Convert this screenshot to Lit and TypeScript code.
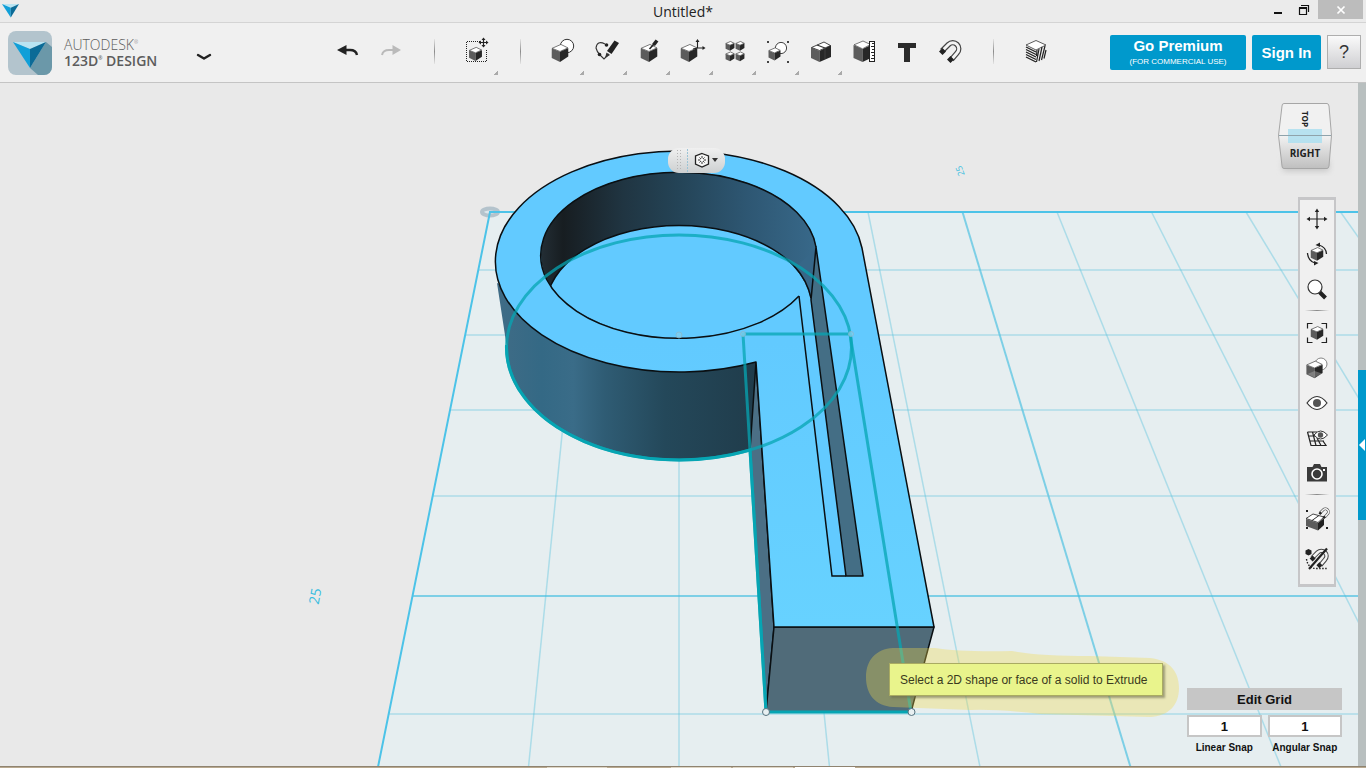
import { LitElement, html, svg, css, nothing } from "lit";
import { customElement, state } from "lit/decorators.js";

/** A small shaded cube centred on (x, y); s is half its height. */
const cube = (x: number, y: number, s: number) => svg`
  <path d="M${x - 0.92 * s} ${y - 0.5 * s}L${x} ${y - 0.15 * s}V${y + s}L${x - 0.92 * s} ${y + 0.55 * s}Z" fill="#5c5c5c"></path>
  <path d="M${x + 0.92 * s} ${y - 0.55 * s}L${x} ${y - 0.15 * s}V${y + s}L${x + 0.92 * s} ${y + 0.4 * s}Z" fill="#272727"></path>
  <path d="M${x - 0.88 * s} ${y - 0.52 * s}L${x + 0.1 * s} ${y - 0.95 * s}L${x + 0.88 * s} ${y - 0.57 * s}L${x} ${y - 0.17 * s}Z"
    fill="#fff" stroke="#444" stroke-width="0.7" stroke-linejoin="round"></path>`;

const magnet = svg`
  <path d="M-8 0L-1.500 -6.500A5.800 5.800 0 0 1 7 2L1.500 8.500" fill="none" stroke="#444" stroke-width="5.400"></path>
  <path d="M-8 0L-1.500 -6.500A5.800 5.800 0 0 1 7 2L1.500 8.500" fill="none" stroke="#f4f4f4" stroke-width="3"></path>
  <path d="M-11 0.500L-7.500 -3L-4 0.500L-7.500 4ZM-3 8.500L0.500 5L4 8.500L0.500 12Z" fill="#222"></path>`;

const ICONS: Record<string, unknown> = {
  undo: svg`<path d="M-11 -1L-1.500 -6V4Z" fill="#222"></path><path d="M-3 -1H2Q8 -1 9 4" fill="none" stroke="#222" stroke-width="2.400"></path>`,
  redo: svg`<path d="M10 -1L1.500 -6V4Z" fill="#bababa"></path><path d="M3 -1H-2Q-8 -1 -9 4" fill="none" stroke="#bababa" stroke-width="2"></path>`,
  transform: svg`
    <path d="M3 -9.500H-10.500V10.500H9.500V-2" fill="none" stroke="#222" stroke-width="1" stroke-dasharray="1 1"></path>
    ${cube(-1.500, 3, 7)}
    <path d="M6.500 -12V-4M3 -8.500H10" stroke="#222" stroke-width="1.200"></path>
    <path d="M6.500 -13.500L8.500 -11H4.500ZM6.500 -3.500L8.500 -6H4.500ZM1.500 -8.500L4 -10.500V-6.500ZM11.500 -8.500L9 -10.500V-6.500Z" fill="#222"></path>`,
  primitives: svg`<circle cx="4" cy="-5" r="6.700" fill="#fff" stroke="#333"></circle>${cube(-3, 2, 9)}`,
  sketch: svg`
    <path d="M-1 -7Q-9 -11 -10 -3Q-9 1 -6 4L-2 8L3 3" fill="none" stroke="#333" stroke-width="1.100"></path>
    <circle cx="0.500" cy="-6" r="1.800" fill="#222"></circle><circle cx="-6.500" cy="3.500" r="1.800" fill="#222"></circle>
    <path d="M8.500 -10.500L13 -8L5.500 3L1 0Z" fill="#222"></path><path d="M0.500 1.500L4 4L-1 7Z" fill="#333"></path>`,
  construct: svg`${cube(0, 2, 9)}<path d="M4.500 -6L8 -10.500" stroke="#222" stroke-width="3.600"></path><path d="M0.500 -2L5 -7" stroke="#222" stroke-width="1.600"></path>`,
  modify: svg`${cube(-3, 2, 9)}
    <path d="M5.500 -9V-3H12M5.500 -3L1 -2" fill="none" stroke="#222" stroke-width="1.100"></path>
    <path d="M5.500 -12L7.500 -9H3.500ZM13.500 -3L10.500 -5V-1Z" fill="#222"></path>`,
  pattern: svg`${cube(-5, -5, 4.800)}${cube(5, -5, 4.800)}${cube(-5, 5.500, 4.800)}${cube(5, 5.500, 4.800)}`,
  group: svg`<circle cx="3" cy="-3" r="5.600" fill="#fff" stroke="#444"></circle>${cube(-3.500, 3, 6.500)}
    <path d="M-11 -10h2v2h-2zM9 -10h2v2h-2zM-11 10h2v2h-2zM9 10h2v2h-2z" fill="#444"></path>`,
  combine: svg`
    <path d="M-10 -3.500L-1.500 0V11L-10 7Z" fill="#5c5c5c"></path><path d="M-1.500 0L10 -6V6L-1.500 11Z" fill="#272727"></path>
    <path d="M-9.500 -3.500L3 -9L9.500 -5.500L-1.500 -0.500Z" fill="#fff" stroke="#333" stroke-width="0.900" stroke-linejoin="round"></path>
    <path d="M-4 -6L4 -3" fill="none" stroke="#333" stroke-width="1.200"></path><path d="M4 -3V8" stroke="#444" stroke-width="0.800"></path>`,
  measure: svg`
    <path d="M-10.500 -6L-1.500 -2V11L-10.500 7Z" fill="#5c5c5c"></path><path d="M-1.500 -2L7 -6V7L-1.500 11Z" fill="#272727"></path>
    <path d="M-10 -6.200L-1 -10L6.500 -6.500L-1.500 -2.200Z" fill="#fff" stroke="#444" stroke-width="0.700"></path>
    <rect x="5.500" y="-9.500" width="5" height="20" fill="#fff" stroke="#222"></rect>
    <path d="M8 -7.500H10M7 -4.500H10M8 -1.500H10M7 1.500H10M8 4.500H10M7 7.500H10" stroke="#222"></path>`,
  text: svg`<path d="M-9 -8H9V-3H3V11H-3V-3H-9Z" fill="#2b2b2b"></path>`,
  snap: magnet,
  material: svg`
    <path d="M-10 -6L0 -10.500L10 -6L0 -1Z" fill="#fff" stroke="#333" stroke-width="0.800"></path>
    <path d="M-10 -4L0 1M-10 -1.500L0 3.500M-10 1L0 6M-10 3.500L0 8.500M-10 6L0 11" stroke="#222" stroke-width="1.300"></path>
    <path d="M0.500 11L3 -2M3 10L6 -4M5.500 9L9 -5M8 7.500L10 -1M0.500 5L1 -1" stroke="#222" stroke-width="1.200"></path>`,
  pan: svg`<path d="M0 -8V8M-8 0H8" stroke="#222" stroke-width="1.200"></path>
    <path d="M0 -10.500L2.200 -7H-2.200ZM0 10.500L2.200 7H-2.200ZM-10.500 0L-7 -2.200V2.200ZM10.500 0L7 -2.200V2.200Z" fill="#222"></path>`,
  orbit: svg`${cube(0, 0, 6.800)}
    <path d="M2 -9Q9 -7 9.500 0M-2 9Q-9 7 -9.500 -1" fill="none" stroke="#222" stroke-width="1.300"></path>
    <path d="M-1.500 -9L3 -11.500V-7ZM1.500 9L-3 11.500V7Z" fill="#222"></path>`,
  zoom: svg`<path d="M2.500 3L8.500 9" stroke="#222" stroke-width="4"></path><circle cx="-2" cy="-2" r="7" fill="#fff" stroke="#333" stroke-width="1.200"></circle>`,
  fit: svg`${cube(0, 0, 6.800)}
    <path d="M-9.500 -4.500V-9.500H-4.500M4.500 -9.500H9.500V-4.500M9.500 4.500V9.500H4.500M-4.500 9.500H-9.500V4.500" fill="none" stroke="#222" stroke-width="1.200"></path>`,
  display: svg`<circle cx="4" cy="-4" r="6" fill="#fff" stroke="#777" stroke-width="0.900"></circle>${cube(-2.500, 1.500, 8.800)}
    <path d="M-9.500 6L-2.500 3L5 5.500L-2.500 9.500Z" fill="#aaa" opacity="0.450"></path>`,
  visibility: svg`<path d="M-10 0Q0 -13 10 0Q0 13 -10 0Z" fill="#fff" stroke="#333" stroke-width="1.200"></path><circle r="4" fill="#555"></circle>`,
  gridview: svg`
    <path d="M-9.500 -6L-6 7.500H9L6 3M-9.500 -6H0M-8.500 -2H-1M-7 3H7M-4.500 -6L-1 7.500M0 0L4 7.500" fill="none" stroke="#222" stroke-width="1.200"></path>
    <path d="M-3 -3Q3.500 -11 10.500 -3Q3.500 5 -3 -3Z" fill="#fff" stroke="#333"></path><circle cx="3.500" cy="-3" r="2.700" fill="#555"></circle>`,
  camera: svg`<path d="M-10 -6H-4.500L-3 -9H3L4.500 -6H10V8.500H-10Z" fill="#3a3a3a"></path>
    <circle cy="1" r="5" fill="none" stroke="#fff" stroke-width="1.600"></circle><rect x="6" y="-4" width="2" height="2" fill="#fff"></rect>`,
  snapgrid: svg`
    <path d="M-11 0L1 4V11.500L-11 7Z" fill="#5c5c5c"></path><path d="M1 4L7 -1V6L1 11.500Z" fill="#222"></path>
    <path d="M-11 -0.500L-4 -5L7 -2L1 3.500Z" fill="#fff" stroke="#333" stroke-width="0.900"></path><path d="M-5 1.500L2 -3.500" stroke="#333"></path>
    <g transform="translate(7 -6) scale(0.500)">${magnet}</g>
    <path d="M-11 -9h2v2h-2zM-11 8h2v2h-2zM9 8h2v2h-2z" fill="#222"></path>`,
  snapoff: svg`
    <path d="M-8.500 -10L-5.500 -8.500V-5L-8.500 -3.500L-11.500 -5V-8.500Z" fill="#222"></path>
    <path d="M-10.500 0Q-9 10 0 9.500H10" fill="none" stroke="#222" stroke-width="1.400" stroke-dasharray="1.500 1.500"></path>
    <g transform="translate(2 -1) scale(0.850)">${magnet}</g>
    <path d="M-8 10L10 -10.500" stroke="#222" stroke-width="2.200"></path>`,
};

const icon = (name: string) => html`
  <svg width="28" height="28" viewBox="-14 -14 28 28" aria-hidden="true">${ICONS[name]}</svg>`;

interface Tool { id: string; label: string; menu?: boolean }

const TOOLS: (Tool | null)[] = [
  { id: "undo", label: "Undo" },
  { id: "redo", label: "Redo" },
  null,
  { id: "transform", label: "Transform", menu: true },
  null,
  { id: "primitives", label: "Primitives", menu: true },
  { id: "sketch", label: "Sketch", menu: true },
  { id: "construct", label: "Construct", menu: true },
  { id: "modify", label: "Modify", menu: true },
  { id: "pattern", label: "Pattern", menu: true },
  { id: "group", label: "Grouping", menu: true },
  { id: "combine", label: "Combine", menu: true },
  { id: "measure", label: "Measure" },
  { id: "text", label: "Text" },
  { id: "snap", label: "Snap" },
  null,
  { id: "material", label: "Material" },
];

const NAV: (Tool | null)[] = [
  { id: "pan", label: "Pan" },
  { id: "orbit", label: "Orbit" },
  { id: "zoom", label: "Zoom" },
  null,
  { id: "fit", label: "Fit" },
  { id: "display", label: "Display style" },
  { id: "visibility", label: "Visibility" },
  { id: "gridview", label: "Grid visibility" },
  { id: "camera", label: "Screenshot" },
  null,
  { id: "snapgrid", label: "Snap to grid" },
  { id: "snapoff", label: "Snapping off" },
];

const logo = svg`
  <path d="M0 0H33L17 7Z" fill="#b9e4f2"></path>
  <path d="M0 0L17 7V26Z" fill="#109fd8"></path>
  <path d="M33 0L17 7V26Z" fill="#0b6b97"></path>`;

@customElement("app-toolbar")
class AppToolbar extends LitElement {
  static styles = css`
    :host {
      display: flex;
      align-items: center;
      height: 59px;
      background: #f0f0f0;
      border-bottom: 1px solid #c4c4c4;
      font-family: "Liberation Sans", Arial, sans-serif;
    }
    button { font: inherit; border: 0; padding: 0; background: none; color: inherit; }
    .brand { display: flex; align-items: center; gap: 12px; width: 319px; padding-left: 8px; }
    .name { font: 14px/16px "Open Sans", "Noto Sans", sans-serif; color: #5c5c5c; }
    .name div { display: flex; }
    .thin { font-weight: 300; }
    .bold { font-weight: 600; }
    .reg { font-size: 5px; line-height: 11px; }
    .chev { display: flex; margin: 8px 0 0 27px; }
    .tools { display: grid; grid-auto-flow: column; grid-auto-columns: 43px; height: 59px; }
    .tool { position: relative; display: grid; place-items: center; padding: 0 1px 3px 0; }
    .sep { width: 1px; height: 25px; place-self: center; margin: 0 1px 3px 0; background: linear-gradient(#e4e4e4, #8c8c8c, #e4e4e4); }
    .more { position: absolute; right: 1px; bottom: 7px; width: 4px; height: 4px; background: linear-gradient(135deg, transparent 50%, #aaa 50%); }
    .account { display: flex; gap: 6px; margin-left: auto; padding-right: 5px; }
    .blue { height: 35px; background: #0099cc; color: #fff; border-radius: 2px; font-size: 15px; font-weight: bold; line-height: 17px; }
    .premium { width: 136px; }
    .sub { display: block; padding-top: 1px; font-size: 8px; font-weight: normal; line-height: 14px; }
    .sign { width: 69px; }
    .help { width: 34px; height: 34px; border: 1px solid #aeaeae; background: linear-gradient(#fafafa, #cfcfd2); font-size: 18px; color: #333; }
  `;

  render() {
    return html`
      <div class="brand">
        <svg width="44" height="44" viewBox="0 0 44 44" role="img" aria-label="123D Design">
          <defs><clipPath id="tile"><rect width="44" height="44" rx="8"></rect></clipPath></defs>
          <g clip-path="url(#tile)">
            <rect width="44" height="44" fill="#b3c4cd"></rect>
            <path d="M38 11L44 16V44H30L22 37Z" fill="#6b98a9"></path>
            <g transform="translate(5 11)">${logo}</g>
          </g>
        </svg>
        <div class="name">
          <div class="thin">AUTODESK<span class="reg">®</span></div>
          <div class="bold">123D<span class="reg">®</span>&nbsp;DESIGN</div>
        </div>
        <button class="chev" aria-label="Application menu">
          <svg width="16" height="8" viewBox="0 0 16 8"><path d="M2 2L8 5.500L14 2" fill="none" stroke="#222" stroke-width="2.400" stroke-linecap="round" stroke-linejoin="round"></path></svg>
        </button>
      </div>
      <div class="tools">
        ${TOOLS.map((t) => t
          ? html`<button class="tool" aria-label=${t.label}>${icon(t.id)}${t.menu ? html`<span class="more"></span>` : nothing}</button>`
          : html`<span class="sep"></span>`)}
      </div>
      <div class="account">
        <button class="blue premium">Go Premium<span class="sub">(FOR COMMERCIAL USE)</span></button>
        <button class="blue sign">Sign In</button>
        <button class="help" aria-label="Help">?</button>
      </div>`;
  }
}

@customElement("app-navbar")
class AppNavbar extends LitElement {
  static styles = css`
    :host { display: flex; flex-direction: column; width: 34px; padding: 1px 0 5px; background: #f0f0f0; border: 2px solid #c6c6c8; border-width: 3px 2px; }
    button { border: 0; padding: 0; background: none; display: grid; place-items: center; height: 35px; }
    .sep { height: 1px; margin: 4px 5px; background: linear-gradient(90deg, #eee, #888, #eee); }
    .sep ~ .sep ~ button { height: 40px; }
  `;

  render() {
    return NAV.map((t) => t
      ? html`<button aria-label=${t.label}>${icon(t.id)}</button>`
      : html`<span class="sep"></span>`);
  }
}

/* Ground plane: columns fan out from the horizon edge to the near edge. */
const COLUMNS = Array.from({ length: 11 }, (_, i) => i - 1);
const ROWS = [270, 335, 410, 496, 596, 714];
const leftEdge = (y: number) => 490 - ((y - 212) * 112) / 555;

@customElement("app-scene")
class AppScene extends LitElement {
  static styles = css`
    :host { display: block; }
    svg { display: block; width: 100%; height: 100%; }
    .minor { stroke: #5cc4de; stroke-opacity: 0.42; stroke-width: 1.5; }
    .major { stroke: #45bfe0; stroke-opacity: 0.65; stroke-width: 2; }
    .edge { stroke: #4cc3e8; stroke-width: 2; }
    .face { stroke: #0a0f12; stroke-width: 1.5; stroke-linejoin: round; }
    .line { fill: none; stroke: #0a0f12; stroke-width: 1.5; }
    .sketch { fill: none; stroke: #06a5b3; stroke-opacity: 0.75; stroke-width: 3; }
    .front { fill: none; stroke: #06a5b3; stroke-width: 3; }
    .axis { font: 14px "Open Sans", sans-serif; fill: #38bde0; text-anchor: middle; }
    .small { font-size: 9px; }
  `;

  render() {
    return html`
      <svg viewBox="0 83 1358 683" preserveAspectRatio="xMidYMid slice" role="img" aria-label="Model view">
        <defs>
          <linearGradient id="outer" gradientUnits="userSpaceOnUse" x1="495" y1="0" x2="756" y2="0">
            <stop offset="0" stop-color="#406c86"></stop><stop offset="0.180" stop-color="#346985"></stop>
            <stop offset="0.300" stop-color="#3a6c88"></stop><stop offset="0.420" stop-color="#2f5c74"></stop>
            <stop offset="0.650" stop-color="#24485a"></stop><stop offset="1" stop-color="#203c4b"></stop>
          </linearGradient>
          <linearGradient id="inner" gradientUnits="userSpaceOnUse" x1="541" y1="0" x2="817" y2="0">
            <stop offset="0" stop-color="#232e35"></stop><stop offset="0.080" stop-color="#171d21"></stop>
            <stop offset="0.300" stop-color="#203542"></stop><stop offset="0.500" stop-color="#244457"></stop>
            <stop offset="0.750" stop-color="#2e5773"></stop><stop offset="1" stop-color="#38698a"></stop>
          </linearGradient>
          <linearGradient id="top" x1="0" y1="0" x2="0" y2="1">
            <stop offset="0.400" stop-color="#62caff"></stop><stop offset="1" stop-color="#67d2ff"></stop>
          </linearGradient>
          <clipPath id="hole"><ellipse cx="679" cy="255" rx="138" ry="83"></ellipse></clipPath>
        </defs>
        <rect y="83" width="1358" height="683" fill="#e9e9e9"></rect>
        <path d="M490 212H1358V767H378Z" fill="#e6eef0"></path>
        ${COLUMNS.map((c) => svg`
          <line class=${c === 3 ? "major" : "minor"} x1=${679 + c * 94.5} y1="212" x2=${679 + c * 150.5} y2="767"></line>`)}
        ${ROWS.map((y) => svg`
          <line class=${y === 596 ? "major" : "minor"} x1=${leftEdge(y)} y1=${y} x2="1358" y2=${y}></line>`)}
        <ellipse cx="490" cy="212" rx="8" ry="3.500" fill="#dce6ec" stroke="#b4c3cc" stroke-width="4"></ellipse>
        <path class="edge" d="M1358 212H490L378 767" fill="none"></path>
        <text class="axis" transform="translate(320 597) rotate(-80)">25</text>
        <text class="axis small" transform="translate(963 170) rotate(-110)">25</text>

        <path d="M497 283L506.500 345A172.500 112.500 0 0 0 751 450L756 362L620 330Z" fill="url(#outer)"></path>
        <path class="face" d="M756 362L774 627L766 712L750 450Z" fill="#4b6f85"></path>
        <path class="face" d="M774 627H934L911 712H766Z" fill="#506b79"></path>
        <path class="face" fill="url(#top)" d="M862 248A184 110.500 0 1 0 756 362L774 627H934Z"></path>
        <ellipse cx="679" cy="255" rx="138" ry="83" fill="url(#inner)"></ellipse>
        <g clip-path="url(#hole)"><ellipse class="face" cx="679" cy="307" rx="133" ry="81.500" fill="#62caff"></ellipse></g>
        <path d="M799 296L816 247L863 576H832Z" fill="#62caff"></path>
        <path d="M795 268L816 247L811 300Q806 280 795 268Z" fill="#376788"></path>
        <path class="line" d="M795 267Q807 280 811 298"></path>
        <path class="face" d="M816 247L863 576H846L811 300Z" fill="#446e85"></path>
        <path class="line" d="M799 296L832 576H846"></path>
        <path class="line" d="M799 296A138 83 0 1 1 816 247"></path>

        <ellipse class="sketch" cx="679" cy="347.500" rx="172.500" ry="112.500"></ellipse>
        <path class="sketch" d="M766 712L743 334H850L911 712"></path>
        <path class="front" d="M506.500 345A172.500 112.500 0 0 0 750 450L766 712H911"></path>
        <g fill="#e8f0f2" stroke="#56727e"><circle cx="766" cy="712" r="3.500"></circle><circle cx="911.500" cy="712" r="3.500"></circle></g>
        <g fill="#7fd0f2" stroke="#8bb9cc" opacity="0.800"><circle cx="679" cy="335" r="3"></circle><circle cx="743" cy="334" r="2.500"></circle><circle cx="851" cy="334" r="2.500"></circle></g>
        <path fill="#f2d84a" fill-opacity="0.340" d="M893 648H935Q960 652 1012 651Q1040 656 1090 656L1150 658C1170 660 1179 672 1179 688C1179 706 1168 716 1150 717L1040 714Q1000 709 970 710L893 707C875 706 866 694 866 677C866 660 876 649 893 648Z"></path>
      </svg>`;
  }
}

@customElement("app-root")
class AppRoot extends LitElement {
  @state() private linear = "1";
  @state() private angular = "1";

  static styles = css`
    :host { display: flex; flex-direction: column; height: 100vh; overflow: hidden; background: #ebebeb; font-family: "Liberation Sans", Arial, sans-serif; color: #111; }
    button { font: inherit; border: 0; padding: 0; background: none; color: inherit; }
    .title { display: grid; grid-template-columns: 1fr auto 1fr; height: 22px; border-bottom: 1px solid #d4d4d4; }
    .mark { margin: 4px 0 0 2px; }
    .doc { font: 14px/23px "Open Sans", "Noto Sans", sans-serif; color: #222; }
    .window { display: flex; justify-content: flex-end; padding-right: 3px; }
    .window button { display: grid; place-items: center; width: 26px; height: 19px; }
    .window .close { width: 45px; margin-left: 1px; background: #bcbcbc; }
    .body { flex: 1; min-height: 0; display: flex; }
    .view { position: relative; flex: 1; min-width: 0; }
    app-scene { height: 100%; }
    app-navbar { position: absolute; top: 114px; right: 22px; }
    .viewcube { position: absolute; top: 17px; right: 23px; }
    .cubetext { font: bold 10px "Open Sans", sans-serif; fill: #222; text-anchor: middle; }
    .toptext { font-size: 8px; }
    .pill { position: absolute; left: 668px; top: 65px; width: 57px; height: 25px; }
    .tip { position: absolute; left: 889px; top: 580px; padding: 2px 15px 0 10px; border: 1px solid #a9ab62; background: #e9f48c; box-shadow: 2px 2px 2px #6d6d4c99; font-size: 12px; line-height: 29px; color: #3a3a1e; white-space: nowrap; }
    .snap { position: absolute; right: 16px; bottom: 11px; width: 155px; display: grid; grid-template-columns: 1fr 1fr; gap: 5px 6px; text-align: center; font-weight: bold; }
    .edit { grid-column: 1 / 3; height: 22px; background: #c6c6c6; font-size: 13px; }
    .field { display: grid; gap: 4px; font-size: 10px; line-height: 14px; }
    .field input { box-sizing: border-box; width: 100%; height: 22px; border: 2px solid #c6c6c6; background: #fff; padding: 0; text-align: center; font: bold 13px "Liberation Sans", Arial, sans-serif; color: #111; }
    .strip { display: grid; grid-template-rows: 287fr 150px 246fr; width: 8px; background: #b8bfbf; }
    .drawer { grid-row: 2; background: #0099cc; display: grid; align-items: center; }
    .task { display: flex; gap: 2px; height: 1px; padding-left: 547px; border-top: 1px solid #8f8370; background: #b9a98f; }
    .tab { width: 60px; background: #ded6c6; }
    .tab.first { margin-right: 62px; }
    .tab.active { background: #fff; }
  `;

  render() {
    return html`
      <header class="title">
        <svg class="mark" width="17" height="14" viewBox="0 0 33 27" aria-hidden="true">${logo}</svg>
        <span class="doc">Untitled*</span>
        <div class="window">
          <button aria-label="Minimize"><svg width="10" height="12"><path d="M1 9H9" stroke="#111" stroke-width="2"></path></svg></button>
          <button aria-label="Restore"><svg width="12" height="12"><path d="M1.500 4H8.500V10.500H1.500Z M3 1.500H10.500V8" fill="none" stroke="#111" stroke-width="1.200"></path><path d="M1 4H9" stroke="#111" stroke-width="2"></path></svg></button>
          <button class="close" aria-label="Close"><svg width="10" height="10"><path d="M1.500 1.500L8.500 8.500M8.500 1.500L1.500 8.500" stroke="#fff" stroke-width="1.700"></path></svg></button>
        </div>
      </header>
      <app-toolbar></app-toolbar>
      <main class="body">
        <section class="view">
          <app-scene></app-scene>
          <svg class="viewcube" width="60" height="76" viewBox="0 0 60 76" role="img" aria-label="View cube: right">
            <defs>
              <linearGradient id="side" x1="0" y1="0" x2="0" y2="1"><stop offset="0" stop-color="#f2f2f2"></stop><stop offset="1" stop-color="#bfbfbf"></stop></linearGradient>
              <filter id="soft" x="-20%" y="-50%" width="140%" height="220%"><feGaussianBlur stdDeviation="3"></feGaussianBlur></filter>
            </defs>
            <path d="M8 60H54V71H8Z" fill="#c4c4c4" filter="url(#soft)"></path>
            <path d="M9 3.500H52Q53.500 3.500 54 6L56.500 35.500H3.500L7 6Q7 3.500 9 3.500Z" fill="#f1f1f1" stroke="#a6a6a6"></path>
            <path d="M3.500 35.500H56.500L54 66Q53.500 68.500 52 68.500H9Q7 68.500 7 66Z" fill="url(#side)" stroke="#a6a6a6"></path>
            <rect x="13" y="29" width="34" height="14" fill="#a9dff0" opacity="0.800"></rect>
            <path d="M4 35.500H56" stroke="#8fa3ab"></path>
            <text class="cubetext toptext" transform="translate(27 19) rotate(90)">TOP</text>
            <text class="cubetext" x="30" y="57">RIGHT</text>
          </svg>
          <button class="pill" aria-label="Selection filter">
            <svg width="57" height="25" viewBox="0 0 57 25">
              <defs><linearGradient id="pillfill" x1="0" y1="0" x2="0" y2="1"><stop offset="0" stop-color="#f0f0f0"></stop><stop offset="1" stop-color="#cdd0d1"></stop></linearGradient></defs>
              <rect width="57" height="25" rx="11" fill="url(#pillfill)"></rect>
              <path d="M9.500 2V23M12.500 2V23" stroke="#b5b5b5" stroke-dasharray="1 2"></path><path d="M19.500 1V24" stroke="#9cc4d6" stroke-dasharray="2 1"></path>
              <path d="M34 5.500L40.500 8V16L34 19L27.500 16V8Z" fill="#f6f6f6" stroke="#222" stroke-width="1.300"></path>
              <path d="M34 8V16M30 12H38M31.500 9.500L36.500 14.500M36.500 9.500L31.500 14.500" stroke="#333"></path><circle cx="34" cy="12" r="1.800" fill="#fff"></circle>
              <path d="M44 10H50L47 14Z" fill="#333"></path>
            </svg>
          </button>
          <div class="tip" role="tooltip">Select a 2D shape or face of a solid to Extrude</div>
          <app-navbar></app-navbar>
          <form class="snap">
            <button class="edit" type="button">Edit Grid</button>
            <label class="field"><input .value=${this.linear} @input=${(e: Event) => (this.linear = (e.target as HTMLInputElement).value)} />Linear Snap</label>
            <label class="field"><input .value=${this.angular} @input=${(e: Event) => (this.angular = (e.target as HTMLInputElement).value)} />Angular Snap</label>
          </form>
        </section>
        <aside class="strip">
          <button class="drawer" aria-label="Open parts panel"><svg width="8" height="12"><path d="M1 6L7 0V12Z" fill="#fff"></path></svg></button>
        </aside>
      </main>
      <footer class="task"><span class="tab first"></span><span class="tab"></span><span class="tab"></span><span class="tab active"></span></footer>`;
  }
}
